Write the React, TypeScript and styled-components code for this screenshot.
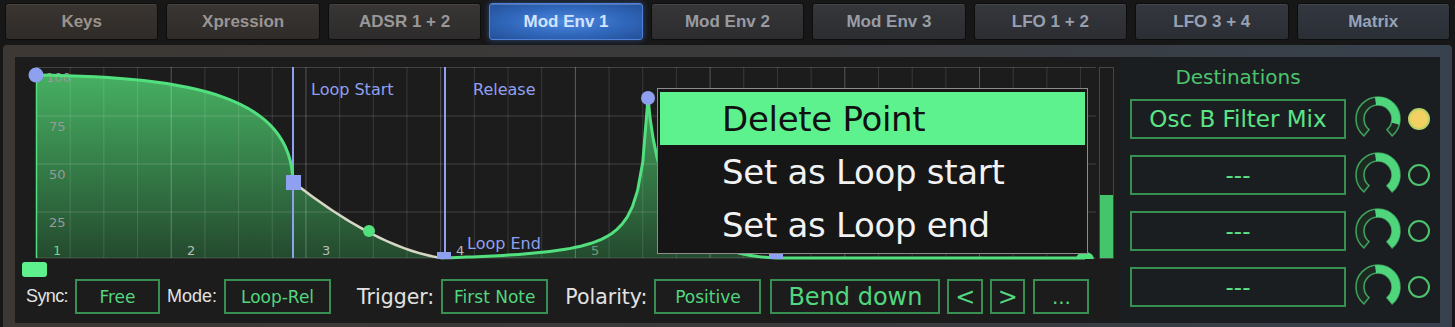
import React from 'react';
import styled, {createGlobalStyle, css} from 'styled-components';

const GlobalStyle = createGlobalStyle`
  html, body {
    margin: 0;
    padding: 0;
    background: #151515;
  }
  body {
    font-family: "DejaVu Sans", Verdana, sans-serif;
  }
`;

const TABS = [
  'Keys',
  'Xpression',
  'ADSR 1 + 2',
  'Mod Env 1',
  'Mod Env 2',
  'Mod Env 3',
  'LFO 1 + 2',
  'LFO 3 + 4',
  'Matrix'
];

const DESTS = [
  {name: 'Osc B Filter Mix', value: 105, on: true},
  {name: '---', value: 140, on: false},
  {name: '---', value: 140, on: false},
  {name: '---', value: 140, on: false}
];

const BLUE = '#8fa0f0';
const GREEN = '#52e07f';

// rising segment between the two loop points (exponential-ish)
const risePoints = () => {
  const pts: string[] = [];
  const c = 0.04;
  for (let i = 1; i <= 40; i++) {
    const u = i / 40;
    const f = (c * u) / (c + 1 - u);
    const x = 405 + u * 207;
    const y = 191 - f * 160;
    pts.push(`${x.toFixed(1)} ${y.toFixed(1)}`);
  }
  return pts;
};

const EnvelopeGraph: React.FC = () => {
  const rise = risePoints();
  const seg1 = 'M0 8 C160 10 255 30 257 115';
  const seg2 = 'M257 115 C294 144 352 183 405 191';
  const seg3 = 'M405 191 L' + rise.join(' L');
  const seg4 = 'M612 31 C622 150 660 188 740 191 L1049 191';
  const fill =
    'M0 191 L0 8 C160 10 255 30 257 115 C294 144 352 183 405 191 L' +
    rise.join(' L') +
    ' C622 150 660 188 740 191 L1060 191 Z';

  const verticals = Array.from({length: 32}, (_, k) => k * 33.68);
  const horizontals = [0.5, 49, 97, 145, 191];

  return (
    <svg width="1060" height="192" style={{overflow: 'visible', display: 'block'}}>
      <defs>
        <linearGradient id="envFill" x1="0" y1="0" x2="0" y2="1">
          <stop offset="0" stopColor="#46b062" />
          <stop offset="1" stopColor="#244a2e" />
        </linearGradient>
      </defs>
      <path d={fill} fill="url(#envFill)" />
      {verticals.map((x, k) => (
        <line
          key={'v' + k}
          x1={x + 0.5}
          x2={x + 0.5}
          y1={0}
          y2={191}
          stroke={
            k === 16
              ? 'rgba(110,220,140,0.45)'
              : k % 4 === 0
              ? 'rgba(255,255,255,0.26)'
              : 'rgba(255,255,255,0.13)'
          }
          strokeWidth={1}
        />
      ))}
      {horizontals.map((y, k) => (
        <line
          key={'h' + k}
          x1={0}
          x2={1060}
          y1={y}
          y2={y}
          stroke="rgba(255,255,255,0.17)"
          strokeWidth={1}
        />
      ))}
      <line x1={257} x2={257} y1={0} y2={191} stroke={BLUE} strokeWidth={2} />
      <line x1={409} x2={409} y1={0} y2={191} stroke={BLUE} strokeWidth={2} />

      <g fontFamily="DejaVu Sans, Verdana, sans-serif" fontSize="13" fill="#9a9a9a">
        <text x={10} y={15}>100</text>
        <text x={13} y={64}>75</text>
        <text x={13} y={112}>50</text>
        <text x={13} y={160}>25</text>
      </g>
      <g fontFamily="DejaVu Sans, Verdana, sans-serif" fontSize="13">
        <text x={17} y={188} fill="#6fd88f">1</text>
        <text x={151} y={188} fill="#b8beb8">2</text>
        <text x={286} y={188} fill="#b8beb8">3</text>
        <text x={420} y={188} fill="#b8beb8">4</text>
        <text x={555} y={188} fill="#6aa07a">5</text>
      </g>
      <g fontFamily="DejaVu Sans, Verdana, sans-serif" fontSize="16" fill={BLUE}>
        <text x={275} y={28}>Loop Start</text>
        <text x={437} y={28}>Release</text>
        <text x={431} y={182}>Loop End</text>
      </g>

      <line x1={0.5} x2={0.5} y1={8} y2={191} stroke={GREEN} strokeWidth={1.5} />
      <path d={seg1} fill="none" stroke={GREEN} strokeWidth={3} />
      <path d={seg2} fill="none" stroke="#d6d6c4" strokeWidth={2.5} />
      <path d={seg3} fill="none" stroke={GREEN} strokeWidth={3} />
      <path d={seg4} fill="none" stroke={GREEN} strokeWidth={3} />

      <circle cx={0} cy={8} r={7.5} fill={BLUE} />
      <rect x={250} y={108} width={15} height={15} fill={BLUE} />
      <circle cx={333} cy={164} r={6} fill={GREEN} />
      <rect x={401} y={185} width={14} height={7} fill={BLUE} />
      <circle cx={612} cy={31} r={7} fill={BLUE} />
      <rect x={733} y={185} width={14} height={7} fill={BLUE} />
      <path d="M1040 192 A9 7 0 0 1 1058 192 Z" fill={GREEN} />
    </svg>
  );
};

const pt = (r: number, a: number) => {
  const rad = (a * Math.PI) / 180;
  return [24 + r * Math.sin(rad), 24 - r * Math.cos(rad)].map((v) => v.toFixed(2));
};

const sector = (a0: number, a1: number, R = 22, r = 14) => {
  const [x0, y0] = pt(R, a0);
  const [x1, y1] = pt(R, a1);
  const [x2, y2] = pt(r, a1);
  const [x3, y3] = pt(r, a0);
  const large = a1 - a0 > 180 ? 1 : 0;
  return `M${x0} ${y0} A${R} ${R} 0 ${large} 1 ${x1} ${y1} L${x2} ${y2} A${r} ${r} 0 ${large} 0 ${x3} ${y3} Z`;
};

const Knob: React.FC<{value: number}> = ({value}) => (
  <KnobSvg width="48" height="48" viewBox="0 0 48 48">
    <path d={sector(-140, 140)} fill="#1c2a21" stroke="#3f9e5c" strokeWidth={1.6} />
    <path d={sector(-8, value)} fill="#4fd67d" />
  </KnobSvg>
);

export default function App() {
  return (
    <>
      <GlobalStyle />
      <Root>
        <TabBar>
          {TABS.map((t, i) => (
            <Tab key={t} $t={i / (TABS.length - 1)} $active={t === 'Mod Env 1'}>
              {t}
            </Tab>
          ))}
        </TabBar>
        <Frame>
          <Inner>
            <EnvSection>
              <GraphRow>
                <Graph>
                  <EnvelopeGraph />
                  <Menu>
                    <MenuItem $active>Delete Point</MenuItem>
                    <MenuItem>Set as Loop start</MenuItem>
                    <MenuItem>Set as Loop end</MenuItem>
                  </Menu>
                </Graph>
                <Meter>
                  <MeterFill style={{height: '33%'}} />
                </Meter>
              </GraphRow>
              <Handle />
              <Controls>
                <Label $narrow $w={42}>Sync:</Label>
                <ValueBox $w={85}>Free</ValueBox>
                <Label $narrow>Mode:</Label>
                <ValueBox $w={107}>Loop-Rel</ValueBox>
                <Label $space={19}>Trigger:</Label>
                <ValueBox $w={107}>First Note</ValueBox>
                <Label $space={10}>Polarity:</Label>
                <ValueBox $w={107}>Positive</ValueBox>
                <ValueBox $w={170} $size={24} $space={2}>Bend down</ValueBox>
                <ValueBox $w={36} $size={24}>&lt;</ValueBox>
                <ValueBox $w={35} $size={24}>&gt;</ValueBox>
                <ValueBox $w={56} $size={20} $space={1}>...</ValueBox>
              </Controls>
            </EnvSection>
            <DestSection>
              <DestTitle>Destinations</DestTitle>
              {DESTS.map((d, i) => (
                <DestRow key={i}>
                  <DestBox>{d.name}</DestBox>
                  <Knob value={d.value} />
                  <Indicator $on={d.on} />
                </DestRow>
              ))}
            </DestSection>
          </Inner>
        </Frame>
      </Root>
    </>
  );
}

const Root = styled.div`
  width: 1455px;
  height: 327px;
  overflow: hidden;
  background: #171717;
`;

const TabBar = styled.div`
  display: flex;
  gap: 8px;
  padding: 3px 5px 0 5px;
  height: 40px;
  box-sizing: border-box;
`;

const Tab = styled.div<{$t: number; $active?: boolean}>`
  flex: 1;
  height: 37px;
  box-sizing: border-box;
  display: flex;
  align-items: center;
  justify-content: center;
  border-radius: 3px;
  border: 1px solid #0d0d0d;
  font: bold 17px "Liberation Sans", Arial, sans-serif;
  color: color-mix(in srgb, #9a938d ${({$t}) => 100 - $t * 100}%, #97a3b8);
  background: linear-gradient(
    180deg,
    color-mix(in srgb, #3a3531 ${({$t}) => 100 - $t * 100}%, #333840) 0%,
    color-mix(in srgb, #2f2b28 ${({$t}) => 100 - $t * 100}%, #2a2e35) 100%
  );
  box-shadow: inset 0 1px 0 rgba(255, 255, 255, 0.07);
  ${({$active}) =>
    $active &&
    css`
      color: #d4e3ff;
      border-color: #4f82d6;
      background: radial-gradient(ellipse at 50% 50%, #4c88de 0%, #3067bb 55%, #244f96 100%);
      box-shadow: 0 0 6px rgba(80, 140, 255, 0.45), inset 0 1px 0 rgba(255, 255, 255, 0.2);
    `}
`;

const Frame = styled.div`
  margin: 5px 3px 0 3px;
  height: 282px;
  box-sizing: border-box;
  padding: 12px 12px 4px 12px;
  border-radius: 4px 4px 0 0;
  background: linear-gradient(90deg, #3d3833 0%, #3a3a3c 55%, #38424e 100%);
`;

const Inner = styled.div`
  display: flex;
  height: 266px;
  background: #1c1c1c;
`;

const EnvSection = styled.div`
  width: 1105px;
  box-sizing: border-box;
  padding: 10px 0 0 7px;
  display: flex;
  flex-direction: column;
  align-items: flex-start;
`;

const GraphRow = styled.div`
  display: flex;
  gap: 3px;
  margin-left: 14px;
  height: 192px;
`;

const Graph = styled.div`
  position: relative;
  width: 1060px;
  height: 192px;
`;

const Menu = styled.div`
  position: absolute;
  left: 621px;
  top: 21px;
  width: 431px;
  height: 166px;
  box-sizing: border-box;
  padding: 3px 2px;
  background: #161616;
  border: 1px solid #8c8c8c;
`;

const MenuItem = styled.div<{$active?: boolean}>`
  height: 53px;
  display: flex;
  align-items: center;
  padding-left: 62px;
  font-size: 34px;
  letter-spacing: -0.3px;
  color: ${({$active}) => ($active ? '#111' : '#f2f2f2')};
  background: ${({$active}) => ($active ? '#5ef28e' : 'transparent')};
`;

const Meter = styled.div`
  width: 15px;
  height: 192px;
  box-sizing: border-box;
  border: 1px solid #454545;
  display: flex;
  align-items: flex-end;
`;

const MeterFill = styled.div`
  width: 100%;
  background: #45c56b;
`;

const Handle = styled.div`
  width: 25px;
  height: 15px;
  margin-top: 3px;
  border-radius: 3px;
  background: #5ef08c;
`;

const Controls = styled.div`
  display: flex;
  align-items: center;
  gap: 7px;
  height: 35px;
  margin-top: 2px;
  padding-left: 4px;
`;

const Label = styled.span<{$narrow?: boolean; $space?: number; $w?: number}>`
  color: #e2e2e2;
  white-space: nowrap;
  margin-left: ${({$space}) => $space || 0}px;
  ${({$w}) =>
    $w &&
    css`
      width: ${$w}px;
      overflow: visible;
      letter-spacing: -0.6px;
    `}
  ${({$narrow}) =>
    $narrow
      ? css`
          font: 18px "Liberation Sans", Arial, sans-serif;
        `
      : css`
          font-size: 20.5px;
        `}
`;

const ValueBox = styled.div<{$w: number; $size?: number; $space?: number}>`
  width: ${({$w}) => $w}px;
  height: 35px;
  margin-left: ${({$space}) => $space || 0}px;
  box-sizing: border-box;
  border: 2px solid #388f52;
  display: flex;
  align-items: center;
  justify-content: center;
  color: #52d67e;
  font-size: ${({$size}) => $size || 17}px;
`;

const DestSection = styled.div`
  flex: 1;
  padding-left: 10px;
  background: #1b1e21;
`;

const DestTitle = styled.div`
  width: 216px;
  text-align: center;
  padding-top: 8px;
  line-height: 24px;
  margin-bottom: 10px;
  font-size: 20px;
  color: #4cc46e;
`;

const DestRow = styled.div`
  display: flex;
  align-items: center;
  height: 40px;
  margin-bottom: 16px;
`;

const DestBox = styled.div`
  width: 216px;
  height: 40px;
  box-sizing: border-box;
  border: 2px solid #388f52;
  display: flex;
  align-items: center;
  justify-content: center;
  color: #5be486;
  font-size: 23px;
`;

const KnobSvg = styled.svg`
  margin-left: 8px;
  display: block;
`;

const Indicator = styled.div<{$on: boolean}>`
  width: 22px;
  height: 22px;
  margin-left: 6px;
  box-sizing: border-box;
  border-radius: 50%;
  border: 2px solid #4cc46e;
  background: ${({$on}) => ($on ? '#f3d062' : 'transparent')};
  ${({$on}) =>
    $on &&
    css`
      border-color: #b8d468;
    `}
`;
